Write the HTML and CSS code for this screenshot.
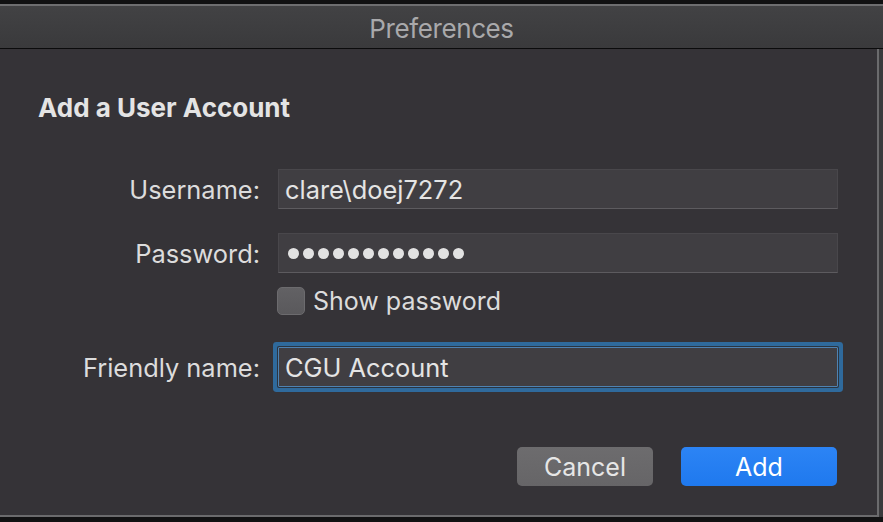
FILE: index.html
```html
<!DOCTYPE html>
<html lang="en">
<head>
    <meta charset="UTF-8">
    <meta name="viewport" content="width=device-width, initial-scale=1.0">
    <title>Preferences</title>
    <link rel="stylesheet" href="styles.css">
</head>
<body>
    <div class="schermo">
        <div class="barra-titolo">Preferences</div>

        <div class="zona-finestra">
            <div class="foglio">
                <h1>Add a User Account</h1>

                <div class="riga-campo riga-utente">
                    <label class="etichetta">Username:</label>
                    <div class="campo">clare\doej7272</div>
                </div>

                <div class="riga-campo riga-password">
                    <label class="etichetta">Password:</label>
                    <div class="campo campo-password">
                        <span></span><span></span><span></span><span></span>
                        <span></span><span></span><span></span><span></span>
                        <span></span><span></span><span></span><span></span>
                    </div>
                </div>

                <div class="riga-campo riga-check">
                    <span class="etichetta"></span>
                    <div class="mostra-password">
                        <span class="casella"></span>
                        <span>Show password</span>
                    </div>
                </div>

                <div class="riga-campo riga-nome">
                    <label class="etichetta">Friendly name:</label>
                    <div class="campo campo-attivo">CGU Account</div>
                </div>

                <div class="pulsanti">
                    <button class="pulsante pulsante-annulla">Cancel</button>
                    <button class="pulsante pulsante-aggiungi">Add</button>
                </div>
            </div>
            <div class="dietro"></div>
        </div>
    </div>
</body>
</html>
```

FILE: styles.css
```css
* {
    box-sizing: border-box;
    margin: 0;
    padding: 0;
}

body {
    font-family: 'Inter', 'Liberation Sans', sans-serif;
    background: #111112;
    color: #dedede;
    width: 883px;
    height: 522px;
    overflow: hidden;
}

.schermo {
    padding-top: 4px;
    height: 522px;
}

.barra-titolo {
    height: 45px;
    border-top: 2px solid #6e6e70;
    border-bottom: 1px solid #0b0b0c;
    background: linear-gradient(#424244, #3a3a3c);
    color: #a9a9ab;
    font-size: 26px;
    line-height: 45px;
    text-align: center;
    letter-spacing: -0.4px;
}

.zona-finestra {
    display: flex;
}

.foglio {
    width: 879px;
    height: 468px;
    background: #353337;
    border-right: 2px solid #6b6b6d;
    border-bottom: 2px solid #6b6b6d;
    padding-top: 44px;
}

.dietro {
    flex: 1;
    height: 468px;
    background: #3a3a3c;
}

h1 {
    font-size: 26px;
    font-weight: 700;
    line-height: 30px;
    padding-left: 38px;
    color: #e4e4e4;
}

.riga-campo {
    display: flex;
    align-items: center;
}

.riga-utente {
    margin-top: 46px;
}

.riga-password {
    margin-top: 24px;
}

.riga-check {
    margin-top: 14px;
    height: 28px;
}

.riga-nome {
    margin-top: 32px;
}

.etichetta {
    width: 278px;
    padding-right: 18px;
    text-align: right;
    font-size: 25.4px;
    color: #dcdcdc;
}

.campo {
    width: 560px;
    height: 40px;
    padding-left: 6px;
    background: #403e42;
    border: 1px solid #49474b;
    border-bottom-color: #5d5b5f;
    font-size: 25.4px;
    line-height: 40px;
    color: #e4e4e4;
}

.campo-password {
    display: flex;
    align-items: center;
    gap: 4px;
    padding-left: 9px;
}

.campo-password span {
    width: 11px;
    height: 11px;
    border-radius: 50%;
    background: #e2e2e2;
}

.mostra-password {
    display: flex;
    align-items: center;
    gap: 8px;
    margin-left: -1px;
    font-size: 25px;
    line-height: 28px;
    color: #dcdcdc;
}

.casella {
    width: 28px;
    height: 28px;
    border-radius: 5px;
    background: linear-gradient(#626164, #5a595c);
    border: 1px solid #6c6b6e;
}

.campo-attivo {
    border: 1px solid #4f82b1;
    border-radius: 1px;
    box-shadow: 0 0 0 1px #2a3440, 0 0 0 5px #2f6a9c;
}

.pulsanti {
    display: flex;
    justify-content: flex-end;
    gap: 28px;
    margin-top: 60px;
    padding-right: 40px;
}

.pulsante {
    height: 39px;
    border: none;
    border-radius: 5px;
    font-family: 'Inter', 'Liberation Sans', sans-serif;
    font-size: 25px;
    cursor: pointer;
}

.pulsante-annulla {
    width: 136px;
    background: linear-gradient(#6d6c6e, #666567);
    color: #e6e6e6;
}

.pulsante-aggiungi {
    width: 156px;
    background: linear-gradient(#2c84f5, #1f79ee);
    color: #ffffff;
}
```
